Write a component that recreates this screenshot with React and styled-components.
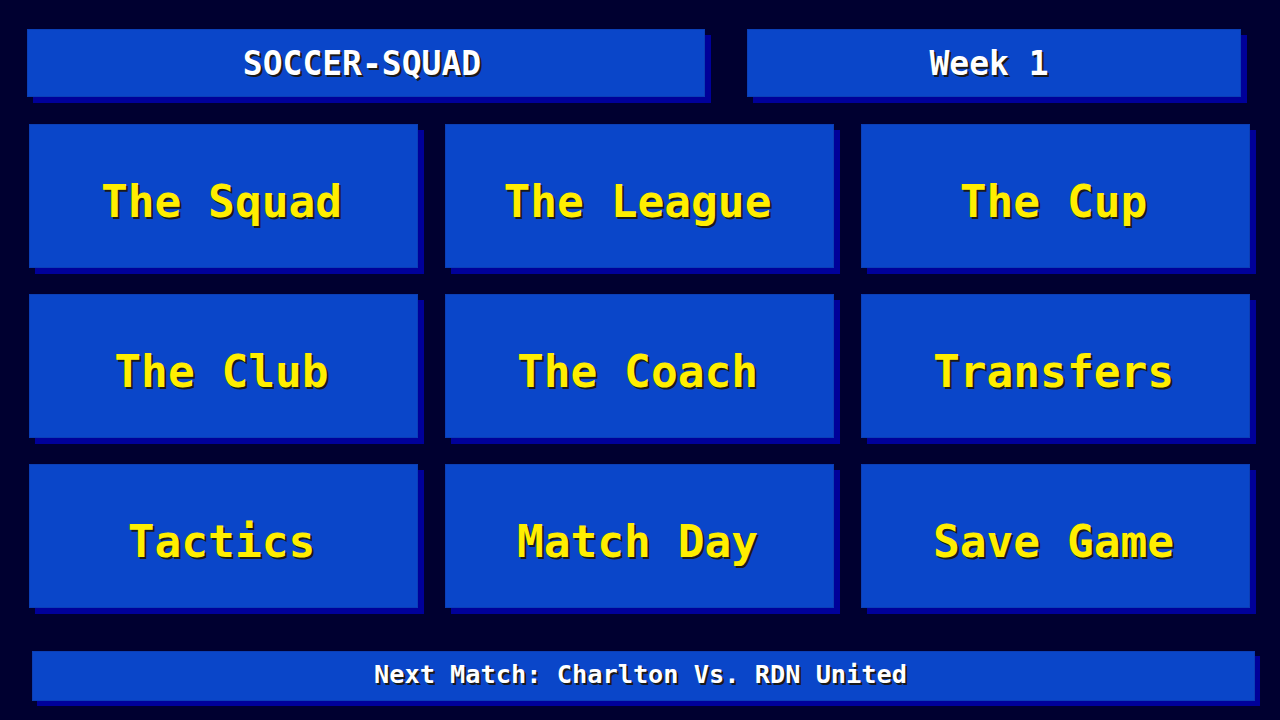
import React from "react";
import styled, { createGlobalStyle } from "styled-components";

const Global = createGlobalStyle`
  html, body { margin: 0; padding: 0; background: #000030; }
  body { font-family: "DejaVu Sans Mono", "Liberation Mono", monospace; }
`;

const Screen = styled.div`
  width: 1280px;
  height: 720px;
  background: #000030;
  box-sizing: border-box;
  padding: 29px 0 0 0;
  display: flex;
  flex-direction: column;
  overflow: hidden;
`;

const Panel = styled.div`
  background: #0a46c9;
  border: 1px solid #0b3fb6;
  box-sizing: border-box;
  box-shadow: ${(p) => p.$sh || 6}px ${(p) => p.$sh || 6}px 0 #000099;
  display: flex;
  align-items: center;
  justify-content: center;
  font-weight: bold;
  white-space: pre;
`;

const HeaderRow = styled.div`
  display: flex;
  gap: 42px;
  padding-left: 27px;
  height: 68px;
`;

const HeaderBox = styled(Panel)`
  width: ${(p) => p.$w}px;
  height: 68px;
  color: #ffffff;
  font-size: 33px;
  text-shadow: 2px 2px 0 #1a1a1a;
  padding-right: ${(p) => p.$shift || 0}px;
`;

const Grid = styled.div`
  display: grid;
  grid-template-columns: repeat(3, 389px);
  grid-auto-rows: 144px;
  column-gap: 27px;
  row-gap: 26px;
  margin: 27px 0 0 29px;
`;

const Tile = styled(Panel)`
  color: #ffee00;
  font-size: 44.5px;
  text-shadow: 2px 2px 0 #1a1a1a;
  padding-top: 10px;
  padding-right: 4px;
  cursor: pointer;
`;

const Footer = styled(Panel)`
  margin: 43px 0 0 32px;
  width: 1223px;
  height: 50px;
  color: #ffffff;
  font-size: 25.3px;
  text-shadow: 2px 2px 0 #1a1a1a;
  padding-bottom: 3px;
  padding-right: 6px;
`;

const items = [
  "The Squad",
  "The League",
  "The Cup",
  "The Club",
  "The Coach",
  "Transfers",
  "Tactics",
  "Match Day",
  "Save Game",
];

export default function App() {
  return (
    <>
      <Global />
      <Screen>
        <HeaderRow>
          <HeaderBox $w={678} $shift={8}>SOCCER-SQUAD</HeaderBox>
          <HeaderBox $w={494} $shift={10}>Week 1</HeaderBox>
        </HeaderRow>
        <Grid>
          {items.map((t) => (
            <Tile key={t}>{t}</Tile>
          ))}
        </Grid>
        <Footer $sh={5}>Next Match: Charlton Vs. RDN United</Footer>
      </Screen>
    </>
  );
}
